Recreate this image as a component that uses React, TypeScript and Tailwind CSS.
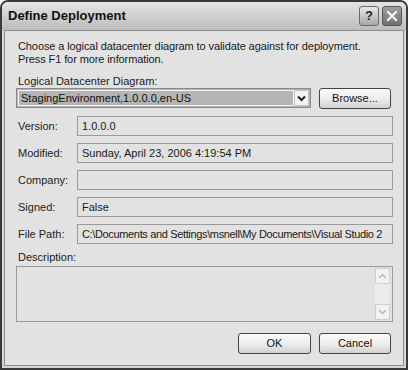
import React from "react";

const font = { fontFamily: '"Liberation Sans", Arial, sans-serif' };

function Field({ label, value, tight }: { label: string; value?: string; tight?: boolean }) {
  return (
    <div className="flex items-center h-[20px] min-w-0">
      <div className="w-[61px] shrink-0 pl-[2px] text-[11px] text-[#222]">{label}</div>
      <div
        className={`flex-1 min-w-0 h-[20px] border border-[#9a9a9a] bg-[#e2e2e2] flex items-center pl-[4px] text-[11px] text-[#1a1a1a] whitespace-nowrap overflow-hidden ${
          tight ? "tracking-[-0.35px]" : ""
        }`}
      >
        {value}
      </div>
    </div>
  );
}

function Btn({ children, w }: { children: React.ReactNode; w: string }) {
  return (
    <div
      className={`${w} shrink-0 h-[21px] rounded-[3px] border border-[#444] bg-gradient-to-b from-[#fafafa] via-[#eeeeee] to-[#d2d2d2] flex items-center justify-center text-[11px] text-[#111]`}
    >
      {children}
    </div>
  );
}

export default function App() {
  return (
    <div className="w-[408px] h-[370px] bg-white" style={font}>
      <div className="w-[408px] h-[370px] border-2 border-[#3a3a3a] rounded-t-[8px] overflow-hidden flex flex-col">
        <div className="h-[28px] shrink-0 bg-gradient-to-b from-[#e4e4e4] via-[#d0d0d0] to-[#bcbcbc] flex items-center pl-[6px] pr-[4px]">
          <div className="text-[13px] text-[#111] flex-1" style={{ fontWeight: 600 }}>
            Define Deployment
          </div>
          <div className="w-[20px] h-[20px] rounded-[3px] border border-[#6a6a6a] bg-gradient-to-b from-[#e8e8e8] to-[#a8a8a8] flex items-center justify-center text-[13px] font-bold text-[#222] mr-[3px]">
            ?
          </div>
          <div className="w-[20px] h-[20px] rounded-[3px] border border-[#555] bg-gradient-to-b from-[#a0a0a0] to-[#707070] flex items-center justify-center">
            <svg width="12" height="12" viewBox="0 0 12 12">
              <path d="M2 2 L10 10 M10 2 L2 10" stroke="#fff" strokeWidth="2" strokeLinecap="square" />
            </svg>
          </div>
        </div>
        <div className="flex-1 min-h-0 bg-[#d6d6d6] px-[2px] pb-[2px] flex">
          <div className="flex-1 min-w-0 border border-[#8c8c8c] bg-[#e2e2e2] pl-[11px] pr-[10px] pt-[9px] flex flex-col">
            <div className="pl-[2px] text-[11px] leading-[13px] text-[#1a1a1a] tracking-[-0.1px]">
              <div>Choose a logical datacenter diagram to validate against for deployment.</div>
              <div>Press F1 for more information.</div>
            </div>
            <div className="pl-[2px] mt-[9px] text-[11px] leading-[13px] text-[#1a1a1a]">Logical Datacenter Diagram:</div>
            <div className="flex h-[20px] mr-[2px] min-w-0">
              <div className="flex-1 min-w-0 h-[20px] border border-[#8a8a8a] bg-[#b4b4b4] flex items-center p-[1px]">
                <div className="flex-1 min-w-0 h-full border border-[#f4f4f4] flex items-center pl-[2px] text-[11px] text-[#111] whitespace-nowrap overflow-hidden">
                  StagingEnvironment,1.0.0.0,en-US
                </div>
                <div className="w-[15px] shrink-0 h-full border border-[#c4c4c4] bg-[#f4f4f4] flex items-center justify-center">
                  <svg width="9" height="7" viewBox="0 0 9 7">
                    <path d="M1 1.5 L4.5 5 L8 1.5" stroke="#222" strokeWidth="2" fill="none" />
                  </svg>
                </div>
              </div>
              <div className="ml-[8px] shrink-0">
                <Btn w="w-[72px]">Browse...</Btn>
              </div>
            </div>
            <div className="mt-[8px] flex flex-col gap-[7px] min-w-0">
              <Field label="Version:" value="1.0.0.0" />
              <Field label="Modified:" value="Sunday, April 23, 2006 4:19:54 PM" />
              <Field label="Company:" />
              <Field label="Signed:" value="False" />
              <Field label="File Path:" value="C:\Documents and Settings\msnell\My Documents\Visual Studio 2" tight />
            </div>
            <div className="pl-[2px] mt-[7px] text-[11px] leading-[13px] text-[#1a1a1a]">Description:</div>
            <div className="mt-[2px] h-[56px] border border-[#9a9a9a] bg-[#e2e2e2] flex justify-end p-[1px] pr-[2px]">
              <div className="w-[15px] h-full flex flex-col bg-[#ececec]">
                <div className="h-[16px] border border-[#d0d0d0] bg-[#f2f2f2] flex items-center justify-center">
                  <svg width="9" height="6" viewBox="0 0 9 6">
                    <path d="M1 5 L4.5 1.5 L8 5" stroke="#b8b8b8" strokeWidth="1.5" fill="none" />
                  </svg>
                </div>
                <div className="flex-1" />
                <div className="h-[16px] border border-[#d0d0d0] bg-[#f2f2f2] flex items-center justify-center">
                  <svg width="9" height="6" viewBox="0 0 9 6">
                    <path d="M1 1 L4.5 4.5 L8 1" stroke="#b8b8b8" strokeWidth="1.5" fill="none" />
                  </svg>
                </div>
              </div>
            </div>
            <div className="mt-[11px] flex justify-end gap-[8px] mr-[2px]">
              <Btn w="w-[73px]">OK</Btn>
              <Btn w="w-[72px]">Cancel</Btn>
            </div>
          </div>
        </div>
      </div>
    </div>
  );
}
